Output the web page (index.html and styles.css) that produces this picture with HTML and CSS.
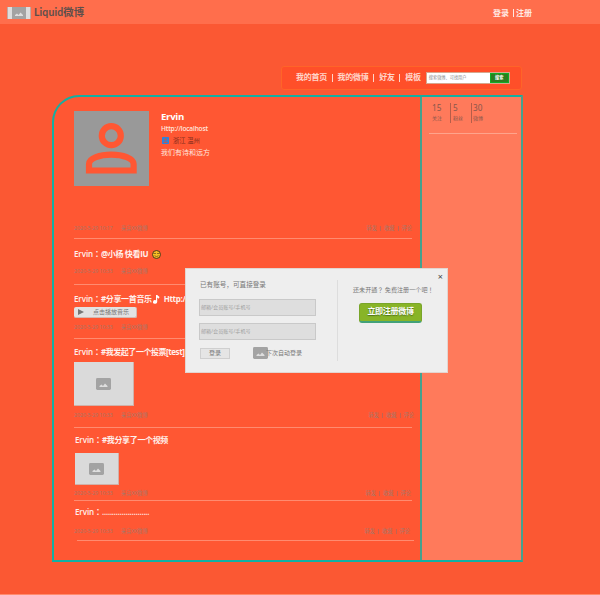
FILE: index.html
```
<!DOCTYPE html>
<html>
<head>
<meta charset="utf-8">
<title>Liquid微博</title>
<link rel="stylesheet" href="styles.css">
</head>
<body>
<svg class="defs" width="0" height="0">
  <symbol id="picture" viewBox="0 0 15 12"><rect width="15" height="12" rx="1.4" fill="#a3a3a3"/><path d="M3.5 9V8L5.5 6.5 7 8 9 5.5 11.5 8V9Z" fill="#dedede"/></symbol>
</svg>
<header class="topbar">
  <div class="logo"><svg width="14" height="12" viewBox="0 0 14 12"><rect width="14" height="12" fill="#a3a3a3"/><path d="M3 9V8L5 6.5 6.5 8 8.5 5.5 11 8V9Z" fill="#dedede"/></svg></div>
  <h1 class="brand">Liquid微博</h1>
  <div class="account"><a>登录</a><i></i><a>注册</a></div>
</header>
<nav class="nav">
  <a>我的首页</a><i></i><a>我的微博</a><i></i><a>好友</a><i></i><a>模板</a>
  <div class="search"><span class="query">搜索微博、可找用户</span><span class="go">搜索</span></div>
</nav>
<main class="board">
  <section class="feed">
    <article class="post profile">
      <div class="person">
        <svg class="avatar" viewBox="0 0 75 75"><rect width="75" height="75" fill="#999"/><g fill="none" stroke="#ff5733" stroke-width="6.2"><circle cx="37.3" cy="24.7" r="9.5"/><path d="M15 59.5V53C15 47 26 43.6 37.3 43.6S59.6 47 59.6 53V59.5Z"/></g></svg>
        <div class="info">
          <h2>Ervin</h2>
          <p class="url">Http://localhost</p>
          <p class="place"><svg width="7" height="7" viewBox="0 0 7 7"><rect width="7" height="7" rx=".7" fill="#2d83dc"/><circle cx="3.5" cy="2.5" r="1.2" fill="#b65c58"/><path d="M1.2 6C1.2 4 5.8 4 5.8 6Z" fill="#b65c58"/></svg><span>浙江 温州</span></p>
          <p class="motto">我们有诗和远方</p>
        </div>
      </div>
      <footer class="meta"><time>2020-5-29 10:17</time><span class="from">来自XX微博</span><span class="acts"><a>转发</a><i></i><a>收藏</a><i></i><a>评论</a></span></footer>
    </article>
    <article class="post mention">
      <h3><b>Ervin：</b><span>@小杨 快看IU</span><svg class="smile" width="9" height="9" viewBox="0 0 9 9"><circle cx="4.5" cy="4.5" r="4" fill="#f6bd24" stroke="#4e371b"/><path d="M1.5 3.5H4M5 3.5H7.5M2.5 5.7Q4.5 7.5 6.5 5.7" fill="none" stroke="#4e371b" stroke-width=".6"/></svg></h3>
      <footer class="meta"><time>2020-5-29 10:33</time><span class="from">来自XX微博</span></footer>
    </article>
    <article class="post music">
      <h3><b>Ervin：</b><span>#分享一首音乐</span><svg class="note" width="7" height="9" viewBox="0 0 7 9"><path d="M3 0H4.2L6.5 2 5.8 3.8 4.2 2.4V7A2.1 1.8 0 1 1 3 5.3Z" fill="#fff"/></svg><span>Http://localhost</span></h3>
      <div class="player"><svg width="6" height="6" viewBox="0 0 6 6"><path d="M0 0L6 3L0 6Z" fill="#777"/></svg><span>点击播放音乐</span></div>
      <footer class="meta"><time>2020-5-29 10:33</time><span class="from">来自XX微博</span></footer>
    </article>
    <article class="post vote">
      <h3><b>Ervin：</b><span>#我发起了一个投票[test]</span></h3>
      <div class="thumb"><svg width="15" height="12"><use href="#picture"/></svg></div>
      <footer class="meta"><time>2020-5-29 10:33</time><span class="from">来自XX微博</span><span class="acts"><a>转发</a><i></i><a>收藏</a><i></i><a>评论</a></span></footer>
    </article>
    <article class="post video">
      <h3><b>Ervin：</b><span>#我分享了一个视频</span></h3>
      <div class="thumb"><svg width="15" height="12"><use href="#picture"/></svg></div>
      <footer class="meta"><time>2020-5-29 10:33</time><span class="from">来自XX微博</span><span class="acts"><a>转发</a><i></i><a>收藏</a><i></i><a>评论</a></span></footer>
    </article>
    <article class="post last">
      <h3><b>Ervin：</b><span class="dots">........................</span></h3>
      <footer class="meta"><time>2020-5-29 10:33</time><span class="from">来自XX微博</span><span class="acts"><a>转发</a><i></i><a>收藏</a><i></i><a>评论</a></span></footer>
    </article>
  </section>
  <aside class="side">
    <div class="stats">
      <div><strong>15</strong><span>关注</span></div>
      <div><strong>5</strong><span>粉丝</span></div>
      <div><strong>30</strong><span>微博</span></div>
    </div>
  </aside>
</main>
<div class="dialog">
  <form class="login">
    <p>已有账号，可直接登录</p>
    <div class="field">邮箱/会员账号/手机号</div>
    <div class="field">邮箱/会员账号/手机号</div>
    <div class="row"><span class="submit">登录</span><svg width="15" height="12"><use href="#picture"/></svg><span class="auto">下次自动登录</span></div>
  </form>
  <div class="join">
    <p>还未开通？ 免费注册一个吧！</p>
    <a class="register">立即注册微博</a>
  </div>
  <span class="close">×</span>
</div>
</body>
</html>
```
FILE: styles.css
```
* { box-sizing: border-box; margin: 0; padding: 0; }
html { background: #fb5833; }
body { position: relative; width: 600px; height: 595px; overflow: hidden; background: #fb5833; border-bottom: 1px solid #ff8b6d; font: 8px/12px "Open Sans", "Noto Sans CJK SC", sans-serif; white-space: nowrap; }
svg { display: block; flex: none; }
.defs { position: absolute; }
i { display: block; flex: none; }

.topbar { display: flex; align-items: center; height: 24px; padding: 2px 68px 0 7px; background: #ff6e4c; }
.logo { display: flex; justify-content: center; width: 24px; height: 12px; background: #ddd; border: solid #c0aaa4; border-width: 0 1px; }
.brand { margin: -2px 0 0 3px; font: bold 10.4px/14px Lato, "Noto Sans CJK SC", sans-serif; letter-spacing: .15px; color: #5e4e4b; }
.account { display: flex; align-items: center; margin-left: auto; margin-top: -1px; font-weight: 700; color: #ffe9e3; }
.account i { width: 1px; height: 8px; margin: 0 2px 0 4px; background: #ffe9e3; }

.nav { display: flex; align-items: center; width: 241px; height: 24px; margin: 42px 0 0 281px; padding-left: 14px; border: 1px solid #ff6428; border-radius: 3px; background: #ff4f29; color: #ffd5ca; font-weight: 700; letter-spacing: -.25px; }
.nav a { position: relative; top: -1px; }
.nav i { width: 1px; height: 8px; margin: 0 4.8px; background: #ffd5ca; }
.search { display: flex; width: 84px; height: 12px; margin-left: 5px; border: 1px solid #d6a78d; background: #fff; font-size: 4.2px; line-height: 9px; letter-spacing: 0; }
.query { flex: 1; padding-left: 2px; color: #888; font-weight: 400; }
.go { width: 19px; border: 1px solid #0eae26; background: #2b7f20; color: #fff; line-height: 7px; text-align: center; }

.board { display: flex; width: 471px; height: 467px; margin: 5px 0 0 52px; border: 2px solid #13afa2; border-right-color: #45a18e; border-radius: 27px 0 0 0; background: #ff5733; overflow: hidden; }
.feed { width: 366px; padding: 0 8px 0 20px; }
.side { flex: 1; padding: 6px 4px 0 7px; border-left: 2px solid #45a18e; background: #ff7a5b; }
.stats { display: flex; width: 88px; height: 31px; border-bottom: 1px solid #ffa48c; color: #88574c; font: 8.2px/10px "Noto Sans", "Noto Sans CJK SC", sans-serif; }
.stats div { height: 20px; padding-left: 2px; width: 21px; }
.stats div + div { border-left: 1px solid #b55d49; }
.stats div:first-child { width: 21px; padding-left: 3px; }
.stats strong, .stats span { display: block; font-weight: 400; }
.stats span { font-size: 5px; }
.stats div:last-child { padding-left: 1px; }

.post { display: flex; flex-direction: column; width: 338px; border-bottom: 1px solid #ff8b70; }
.meta { display: flex; margin-top: auto; height: 8px; color: #a6776a; font-size: 5.2px; line-height: 8px; }
.meta time { width: 47px; }
.acts { display: flex; align-items: center; margin-left: auto; }
.acts i { width: 1px; height: 5px; margin: 0 3.1px; background: #c16350; }
.vote .acts { margin-right: -2px; }
.post h3 { display: flex; align-items: center; height: 12px; color: #fff0ec; font-size: 8px; font-weight: 700; letter-spacing: -.35px; }
.post h3 b { width: 27px; font-family: "Open Sans", "Noto Sans CJK TC", sans-serif; font-weight: 600; letter-spacing: -.1px; }
.thumb { display: flex; align-items: center; justify-content: center; background: #dadada; border: solid #d1b1a9; border-width: 0 1px 1px 0; }

.profile { height: 142px; padding: 14px 0 6px; }
.person { display: flex; }
.avatar { width: 75px; height: 75px; }
.info { padding-left: 12px; color: #ffe5de; }
.info h2 { color: #fff; font-size: 9.6px; font-weight: 700; line-height: 12px; letter-spacing: -.3px; }
.url { font-size: 6.6px; font-weight: 600; letter-spacing: -.2px; }
.place { display: flex; align-items: center; padding-left: 1px; color: #842e1e; font-size: 6.3px; line-height: 11px; }
.place span { margin-left: 4px; }
.motto { font-size: 7px; line-height: 13px; }
.mention { height: 46px; padding: 9px 0 9px; }
.smile { margin-left: 4px; }
.music { height: 54px; padding: 8px 0 7px; }
.note { margin: 0 4px 0 1px; }
.player { display: flex; align-items: center; width: 63px; height: 11px; margin-top: 2px; padding-left: 4px; border: solid #d4b8b0; border-width: 0 1px 1px 0; border-radius: 2px; background: #e2e2e2; color: #777; font-size: 6px; }
.player span { margin-left: 9px; }
.vote { height: 89px; padding: 7px 0 8px; }
.vote h3 { letter-spacing: -.45px; }
.vote .thumb { width: 60px; height: 44px; margin-top: 4px; }
.video { height: 73px; padding: 6px 0 3px; }
.video h3 { padding-left: 1px; }
.video .thumb { width: 44px; height: 32px; margin: 7px 0 0 1px; }
.video .acts { margin-right: 1px; }
.last { height: 40px; margin-left: 3px; width: 337px; padding: 5px 0 5px; }
.last h3 { margin-left: -2px; }
.last .meta { margin-left: -3px; }
.last .acts { margin-right: 4px; }
.post .dots { font-weight: 600; letter-spacing: -.22px; }

.dialog { position: absolute; left: 185px; top: 268px; display: flex; width: 263px; height: 105px; padding-top: 11px; border: 1px solid #e3d5d0; background: #eee; color: #777; font-size: 6.6px; }
.login { width: 152px; height: 81px; padding-left: 13px; border-right: 1px solid #ddd; }
.login p { height: 19px; padding-left: 1px; line-height: 10px; }
.field { width: 117px; height: 17px; margin-bottom: 7px; padding-left: 1px; border: 1px solid #c9c9c9; background: #dedede; color: #a0a0a0; font-size: 5.1px; line-height: 14px; }
.row { display: flex; align-items: center; margin-top: 7px; font-size: 6px; }
.submit { width: 30px; height: 11px; margin: 0 23px 0 1px; border: 1px solid #cfcfcf; background: #e5e5e5; line-height: 9px; text-align: center; }
.auto { margin-left: -2px; }
.join { padding: 4px 0 0 15px; font-size: 6.1px; }
.join p { font-family: "Noto Sans CJK TC", sans-serif; }
.register { display: block; width: 63px; height: 20px; margin: 7px 0 0 6px; border: 1px solid #79a52a; border-bottom: 2px solid #42a179; border-radius: 3px; background: #88b427; color: #fff; font-size: 8px; font-weight: 700; line-height: 14px; letter-spacing: -.3px; text-align: center; text-shadow: 0 1px 1px #4e711a; }
.close { position: absolute; top: 3px; right: 4px; color: #444; font-size: 9px; line-height: 10px; }
```
